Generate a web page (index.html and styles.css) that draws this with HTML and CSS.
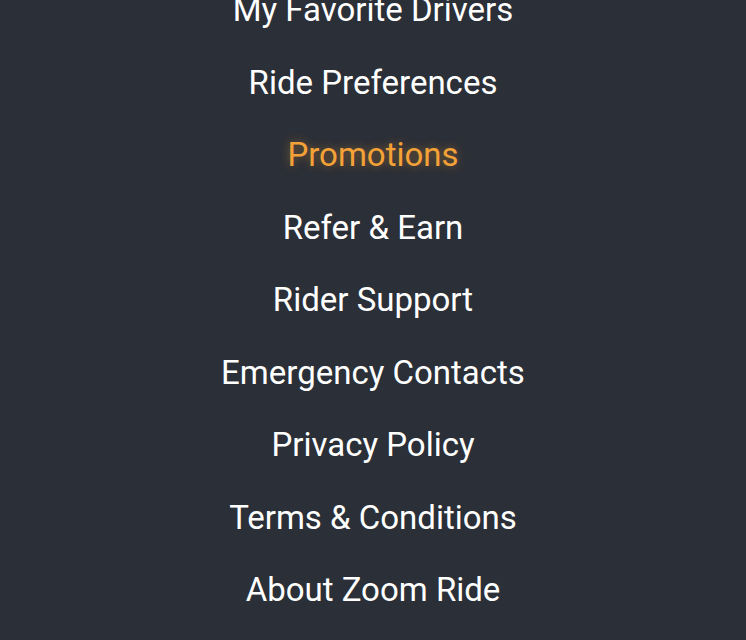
FILE: index.html
```html
<!DOCTYPE html>
<html lang="en">
<head>
    <meta charset="UTF-8">
    <meta name="viewport" content="width=device-width, initial-scale=1.0">
    <title>Menu</title>
    <link rel="stylesheet" href="styles.css">
</head>
<body>
<nav class="menu">
    <a class="menu-item" href="#">My Favorite Drivers</a>
    <a class="menu-item" href="#">Ride Preferences</a>
    <a class="menu-item active" href="#">Promotions</a>
    <a class="menu-item" href="#">Refer &amp; Earn</a>
    <a class="menu-item" href="#">Rider Support</a>
    <a class="menu-item" href="#">Emergency Contacts</a>
    <a class="menu-item" href="#">Privacy Policy</a>
    <a class="menu-item" href="#">Terms &amp; Conditions</a>
    <a class="menu-item" href="#">About Zoom Ride</a>
</nav>
</body>
</html>
```

FILE: styles.css
```css
html, body {
    margin: 0;
    padding: 0;
    height: 100%;
    overflow: hidden;
}
body {
    font-family: Roboto, 'Noto Sans', sans-serif;
    background: #2b2f37;
    color: #fff;
}
.menu {
    display: flex;
    flex-direction: column;
    align-items: center;
    margin-top: -26px;
}
.menu-item {
    display: block;
    font-size: 33px;
    line-height: 72.5px;
    color: #fff;
    text-decoration: none;
}
.menu-item.active {
    color: #f4a237;
    text-shadow: 0 0 10px rgba(244, 162, 55, 0.45);
}
```
